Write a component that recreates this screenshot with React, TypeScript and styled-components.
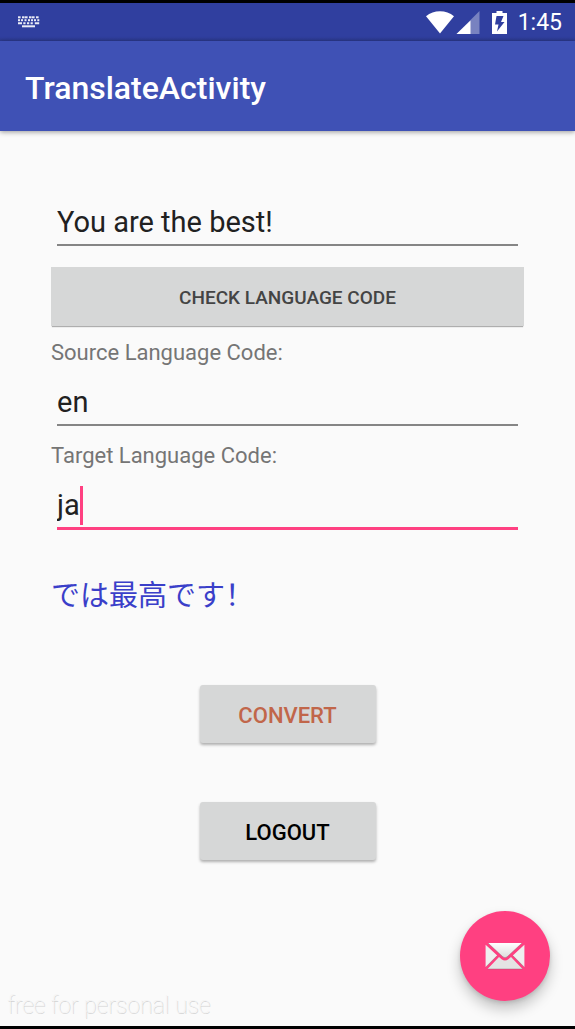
import React, { useState } from 'react';
import styled, { createGlobalStyle } from 'styled-components';

const colors = {
  primary: '#3f51b5',
  primaryDark: '#303f9f',
  accent: '#ff4081',
  surface: '#fafafa',
  button: '#d6d7d7',
};

const GlobalStyle = createGlobalStyle`
  * { box-sizing: border-box; }
  body {
    margin: 0;
    background: ${colors.surface};
    font-family: Roboto, "Noto Sans CJK SC", sans-serif;
  }
`;

const Screen = styled.div`
  display: flex;
  flex-direction: column;
  min-height: 100vh;
  border-top: 3px solid #000;
  border-bottom: 3px solid #000;
`;

const StatusBar = styled.div`
  display: flex;
  align-items: center;
  height: 38px;
  padding: 0 13px 0 17px;
  background: linear-gradient(${colors.primaryDark} 34px, #2c3a90);
  color: #fff;
`;

const StatusIcons = styled.div`
  display: flex;
  align-items: center;
  margin-left: auto;
`;

const BatterySlot = styled.span`
  display: flex;
  margin: 0 11px 0 12px;
`;

const Clock = styled.time`
  font-size: 23px;
  font-weight: 400;
  line-height: 36px;
  padding-top: 2px;
`;

const AppBar = styled.header`
  display: flex;
  align-items: center;
  height: 90px;
  padding: 4px 25px 0;
  background: ${colors.primary};
  box-shadow: 0 1px 5px rgba(0, 0, 0, 0.4);
`;

const Title = styled.h1`
  margin: 0;
  color: #fff;
  font-size: 32px;
  font-weight: 500;
  line-height: 40px;
`;

const Form = styled.form`
  display: flex;
  flex-direction: column;
  padding: 65px 51px 0;
`;

const Field = styled.div<{ $active?: boolean }>`
  box-sizing: content-box;
  display: flex;
  align-items: center;
  height: 44px;
  margin: 0 6px 3px;
  padding-top: 4px;
  border-bottom: ${(p) => (p.$active ? `3px solid ${colors.accent}` : '2px solid #858585')};
`;

const TextInput = styled.input<{ $hug?: boolean }>`
  ${(p) => (p.$hug ? 'field-sizing: content;' : 'flex: 1;')}
  min-width: 0;
  height: 40px;
  padding: 0;
  border: 0;
  outline: 0;
  background: transparent;
  color: #212121;
  font-family: inherit;
  font-size: 29px;
`;

const Caret = styled.span`
  width: 3px;
  height: 39px;
  background: ${colors.accent};
`;

const Label = styled.label`
  margin: 13px 0 9px;
  color: #757575;
  font-size: 22px;
  line-height: 28px;
`;

const Result = styled.output`
  margin-top: 40px;
  color: #3a3fc9;
  font-family: "Noto Sans CJK SC", sans-serif;
  font-size: 29px;
  line-height: 40px;
`;

const Button = styled.button`
  border: 0;
  padding: 2px 0 0;
  background: ${colors.button};
  font-family: inherit;
  font-weight: 500;
  text-transform: uppercase;
`;

const WideButton = styled(Button)`
  height: 59px;
  margin-top: 18px;
  color: #444;
  font-size: 19px;
  box-shadow: 0 2px 1px -1px rgba(0, 0, 0, 0.3);
`;

const Actions = styled.div`
  display: flex;
  flex-direction: column;
  align-items: center;
  gap: 59px;
  margin-top: 72px;
`;

const ActionButton = styled(Button)<{ $color: string }>`
  width: 176px;
  height: 58px;
  border-radius: 3px;
  color: ${(p) => p.$color};
  font-size: 22px;
  box-shadow: 0 2px 3px rgba(0, 0, 0, 0.3);
`;

const Watermark = styled.footer`
  margin-top: auto;
  padding: 0 7px 4px;
  color: #f4f4f4;
  font-size: 23px;
  font-weight: 100;
  line-height: 32px;
  text-shadow: 1px 1px 0 #d2d2d2;
`;

const Fab = styled.button`
  position: fixed;
  right: 25px;
  bottom: 28px;
  display: flex;
  align-items: center;
  justify-content: center;
  width: 90px;
  height: 90px;
  padding: 0;
  border: 0;
  border-radius: 50%;
  background: ${colors.accent};
  box-shadow: 0 8px 14px rgba(0, 0, 0, 0.22), 0 2px 4px rgba(0, 0, 0, 0.12);
`;

const KeyboardIcon = () => (
  <svg width="23" height="12" viewBox="0 0 23 12" fill="#fff" fillOpacity="0.9" aria-hidden="true">
    {[1, 5, 8, 12, 15, 19].map((x) => (
      <rect key={x} x={x} y="0.3" width="2.6" height="2" />
    ))}
    {[1, 4, 7.5, 11, 14, 17, 20.3].map((x) => (
      <rect key={x} x={x} y="3.2" width="2" height="2" />
    ))}
    <path d="M1 6.3h4v2H1zM6.3 6.3h2.2v2H6.3zM10 6.3h2.2v2H10zM13.6 6.3h2.2v2h-2.2zM17.8 6.3h4.4v2h-4.4z" />
    <rect x="5" y="9.3" width="13" height="2" />
  </svg>
);

const WifiIcon = () => (
  <svg width="28" height="24" viewBox="0 0 28 24" fill="#fff" aria-hidden="true">
    <path d="M0 6.2C4 2.9 8.8 1.2 14 1.2s10 1.7 14 5L14 23.6z" />
  </svg>
);

const SignalIcon = () => (
  <svg width="26" height="24" viewBox="0 0 26 24" fill="#fff" aria-hidden="true">
    <path d="M25.5 1v23H2.5z" fillOpacity="0.35" />
    <path d="M16.5 10.5V24H2.5z" />
  </svg>
);

const BatteryIcon = () => (
  <svg width="15" height="24" viewBox="0 0 15 24" aria-hidden="true">
    <path d="M4.500 1h6v2H15V24H0V3h4.500z" fill="#fff" />
    <path d="M11.500 6H4.500L3 14.500h3.500L5 21.500l7.500-9.500H9z" fill={colors.primaryDark} />
  </svg>
);

const MailIcon = () => (
  <svg width="40" height="28" viewBox="0 0 40 28" aria-hidden="true">
    <defs>
      <linearGradient id="paper" x1="0" y1="0" x2="0" y2="1">
        <stop offset="0" stopColor="#fff" />
        <stop offset="1" stopColor="#dcdcdc" />
      </linearGradient>
    </defs>
    <path d="M3 1h34L22.200 14.800q-2.200 1.800-4.400 0z" fill="url(#paper)" />
    <path d="M0.600 2.800 12.200 13.600 0.600 25.200zM39.400 2.800 27.800 13.600 39.400 25.200z" fill="#efefef" />
    <path d="M2.500 27 14 15l2.600 2.300q3.400 2.600 6.800 0L26 15l11.500 12z" fill="#e4e4e4" />
    <path
      d="M3 1 17.800 14.800q2.200 1.800 4.400 0L37 1M2.500 27h35M0.600 25.200 12.200 13.600M39.400 25.200 27.800 13.600"
      fill="none"
      stroke="#8a6070"
      strokeOpacity="0.6"
      strokeWidth="0.700"
    />
  </svg>
);

export default function App() {
  const [text, setText] = useState('You are the best!');
  const [source, setSource] = useState('en');
  const [target, setTarget] = useState('ja');

  return (
    <>
      <GlobalStyle />
      <Screen>
        <StatusBar>
          <KeyboardIcon />
          <StatusIcons>
            <WifiIcon />
            <SignalIcon />
            <BatterySlot>
              <BatteryIcon />
            </BatterySlot>
            <Clock>1:45</Clock>
          </StatusIcons>
        </StatusBar>
        <AppBar>
          <Title>TranslateActivity</Title>
        </AppBar>
        <Form onSubmit={(e) => e.preventDefault()}>
          <Field>
            <TextInput aria-label="Text to translate" value={text} onChange={(e) => setText(e.target.value)} />
          </Field>
          <WideButton type="button">Check language code</WideButton>
          <Label htmlFor="source">Source Language Code:</Label>
          <Field>
            <TextInput id="source" value={source} onChange={(e) => setSource(e.target.value)} />
          </Field>
          <Label htmlFor="target">Target Language Code:</Label>
          <Field $active>
            <TextInput id="target" $hug value={target} onChange={(e) => setTarget(e.target.value)} />
            <Caret />
          </Field>
          <Result htmlFor="target">では最高です！</Result>
          <Actions>
            <ActionButton type="submit" $color="#c1664a">Convert</ActionButton>
            <ActionButton type="button" $color="#000">Logout</ActionButton>
          </Actions>
        </Form>
        <Watermark>free for personal use</Watermark>
        <Fab type="button" aria-label="Send mail">
          <MailIcon />
        </Fab>
      </Screen>
    </>
  );
}
